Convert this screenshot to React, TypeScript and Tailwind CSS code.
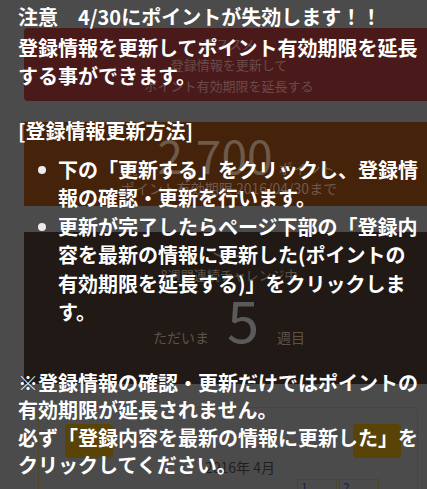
const jp = "font-['Noto_Sans_CJK_JP','Noto_Sans',sans-serif]";

function Page() {
  return (
    <div className="flex flex-col pt-[28px]">
      <div className="ml-[24px] w-[410px] h-[73px] shrink-0 rounded-[4px] bg-[#4a1a1a] flex flex-col items-center justify-center text-[13px] leading-[21px] text-[#6b4a4a]">
        <span>オススメ</span>
        <span>登録情報を更新して</span>
        <span>ポイント有効期限を延長する</span>
      </div>

      <div className="mt-[21px] ml-[24px] w-[410px] h-[84px] shrink-0 bg-[#45220a] flex flex-col items-center text-[#6e5a4a]">
        <div className="flex items-baseline gap-[6px] mt-[6px]">
          <span className="text-[14px]">現在</span>
          <span className="text-[46px] leading-[52px]">2,700</span>
          <span className="text-[14px]">ポイント</span>
        </div>
        <span className="text-[14px] leading-[20px] -mt-[2px]">ポイント有効期限 2016/04/30まで</span>
      </div>

      <div className="mt-[26px] ml-[24px] w-[410px] h-[152px] shrink-0 bg-[#211915] flex flex-col items-center text-[#5c524a]">
        <svg width="34" height="12" viewBox="0 0 34 12" className="mt-[18px]">
          <path d="M2 3 Q17 12 32 3" fill="none" stroke="#5a5020" strokeWidth="2" />
        </svg>
        <span className="text-[13px] leading-[18px] mt-[4px]">8週間連続チャレンジ中</span>
        <div className="flex items-baseline gap-[18px] mt-[2px]">
          <span className="text-[14px]">ただいま</span>
          <span className="text-[58px] leading-[64px] text-[#5a5a5a]">5</span>
          <span className="text-[14px]">週目</span>
        </div>
      </div>

      <div className="mt-[23px] ml-[38px] w-[380px] h-[120px] shrink-0 rounded-[4px] border border-[#4c4626]">
        <div className="flex justify-between pl-[26px] pr-[16px] pt-[16px]">
          <div className="w-[48px] h-[34px] rounded-[4px] bg-[#5a4307]" />
          <div className="w-[48px] h-[34px] rounded-[4px] bg-[#5a4307]" />
        </div>
        <div className="pl-[24px] text-center text-[14px] leading-[18px] text-[#1f1f1f]">2016年 4月</div>
        <div className="ml-[48px] mt-[3px] grid grid-cols-[repeat(7,40px)] gap-[2px]">
          <div />
          <div />
          <div />
          <div />
          <div />
          <div className="h-[30px] border border-[#4c4626] pl-[3px] text-[12px] leading-[14px] text-[#1c1c50]">1</div>
          <div className="h-[30px] border border-[#4c4626] pl-[3px] text-[12px] leading-[14px] text-[#1c1c50]">2</div>
        </div>
      </div>
    </div>
  );
}

function Bullet({ children }: { children: React.ReactNode }) {
  return (
    <li className="flex">
      <span className="w-[40px] shrink-0 pl-[20px] pt-[10px]">
        <span className="block w-[8px] h-[8px] rounded-full bg-[#ececec]" />
      </span>
      <span>{children}</span>
    </li>
  );
}

function Notice() {
  return (
    <div className="absolute inset-0 pl-[18px] pr-[8px] pt-[3px] text-white font-bold text-[20px]">
      <p className="leading-[28px]">注意　4/30にポイントが失効します！！</p>
      <p className="mt-[3px] leading-[27.5px]">
        登録情報を更新してポイント有効期限を延長する事ができます。
        <br />
        <br />
        [登録情報更新方法]
      </p>
      <ul className="mt-[11.5px] leading-[28.5px]">
        <Bullet>下の「更新する」をクリックし、登録情報の確認・更新を行います。</Bullet>
        <Bullet>更新が完了したらページ下部の「登録内容を最新の情報に更新した(ポイントの有効期限を延長する)」をクリックします。</Bullet>
      </ul>
      <p className="mt-[42.5px] leading-[27.3px]">
        ※登録情報の確認・更新だけではポイントの有効期限が延長されません。
        <br />
        必ず「登録内容を最新の情報に更新した」をクリックしてください。
      </p>
    </div>
  );
}

export default function App() {
  return (
    <div className={`relative w-[427px] h-[489px] overflow-hidden bg-[#4b4b4b] ${jp}`}>
      <Page />
      <Notice />
    </div>
  );
}
